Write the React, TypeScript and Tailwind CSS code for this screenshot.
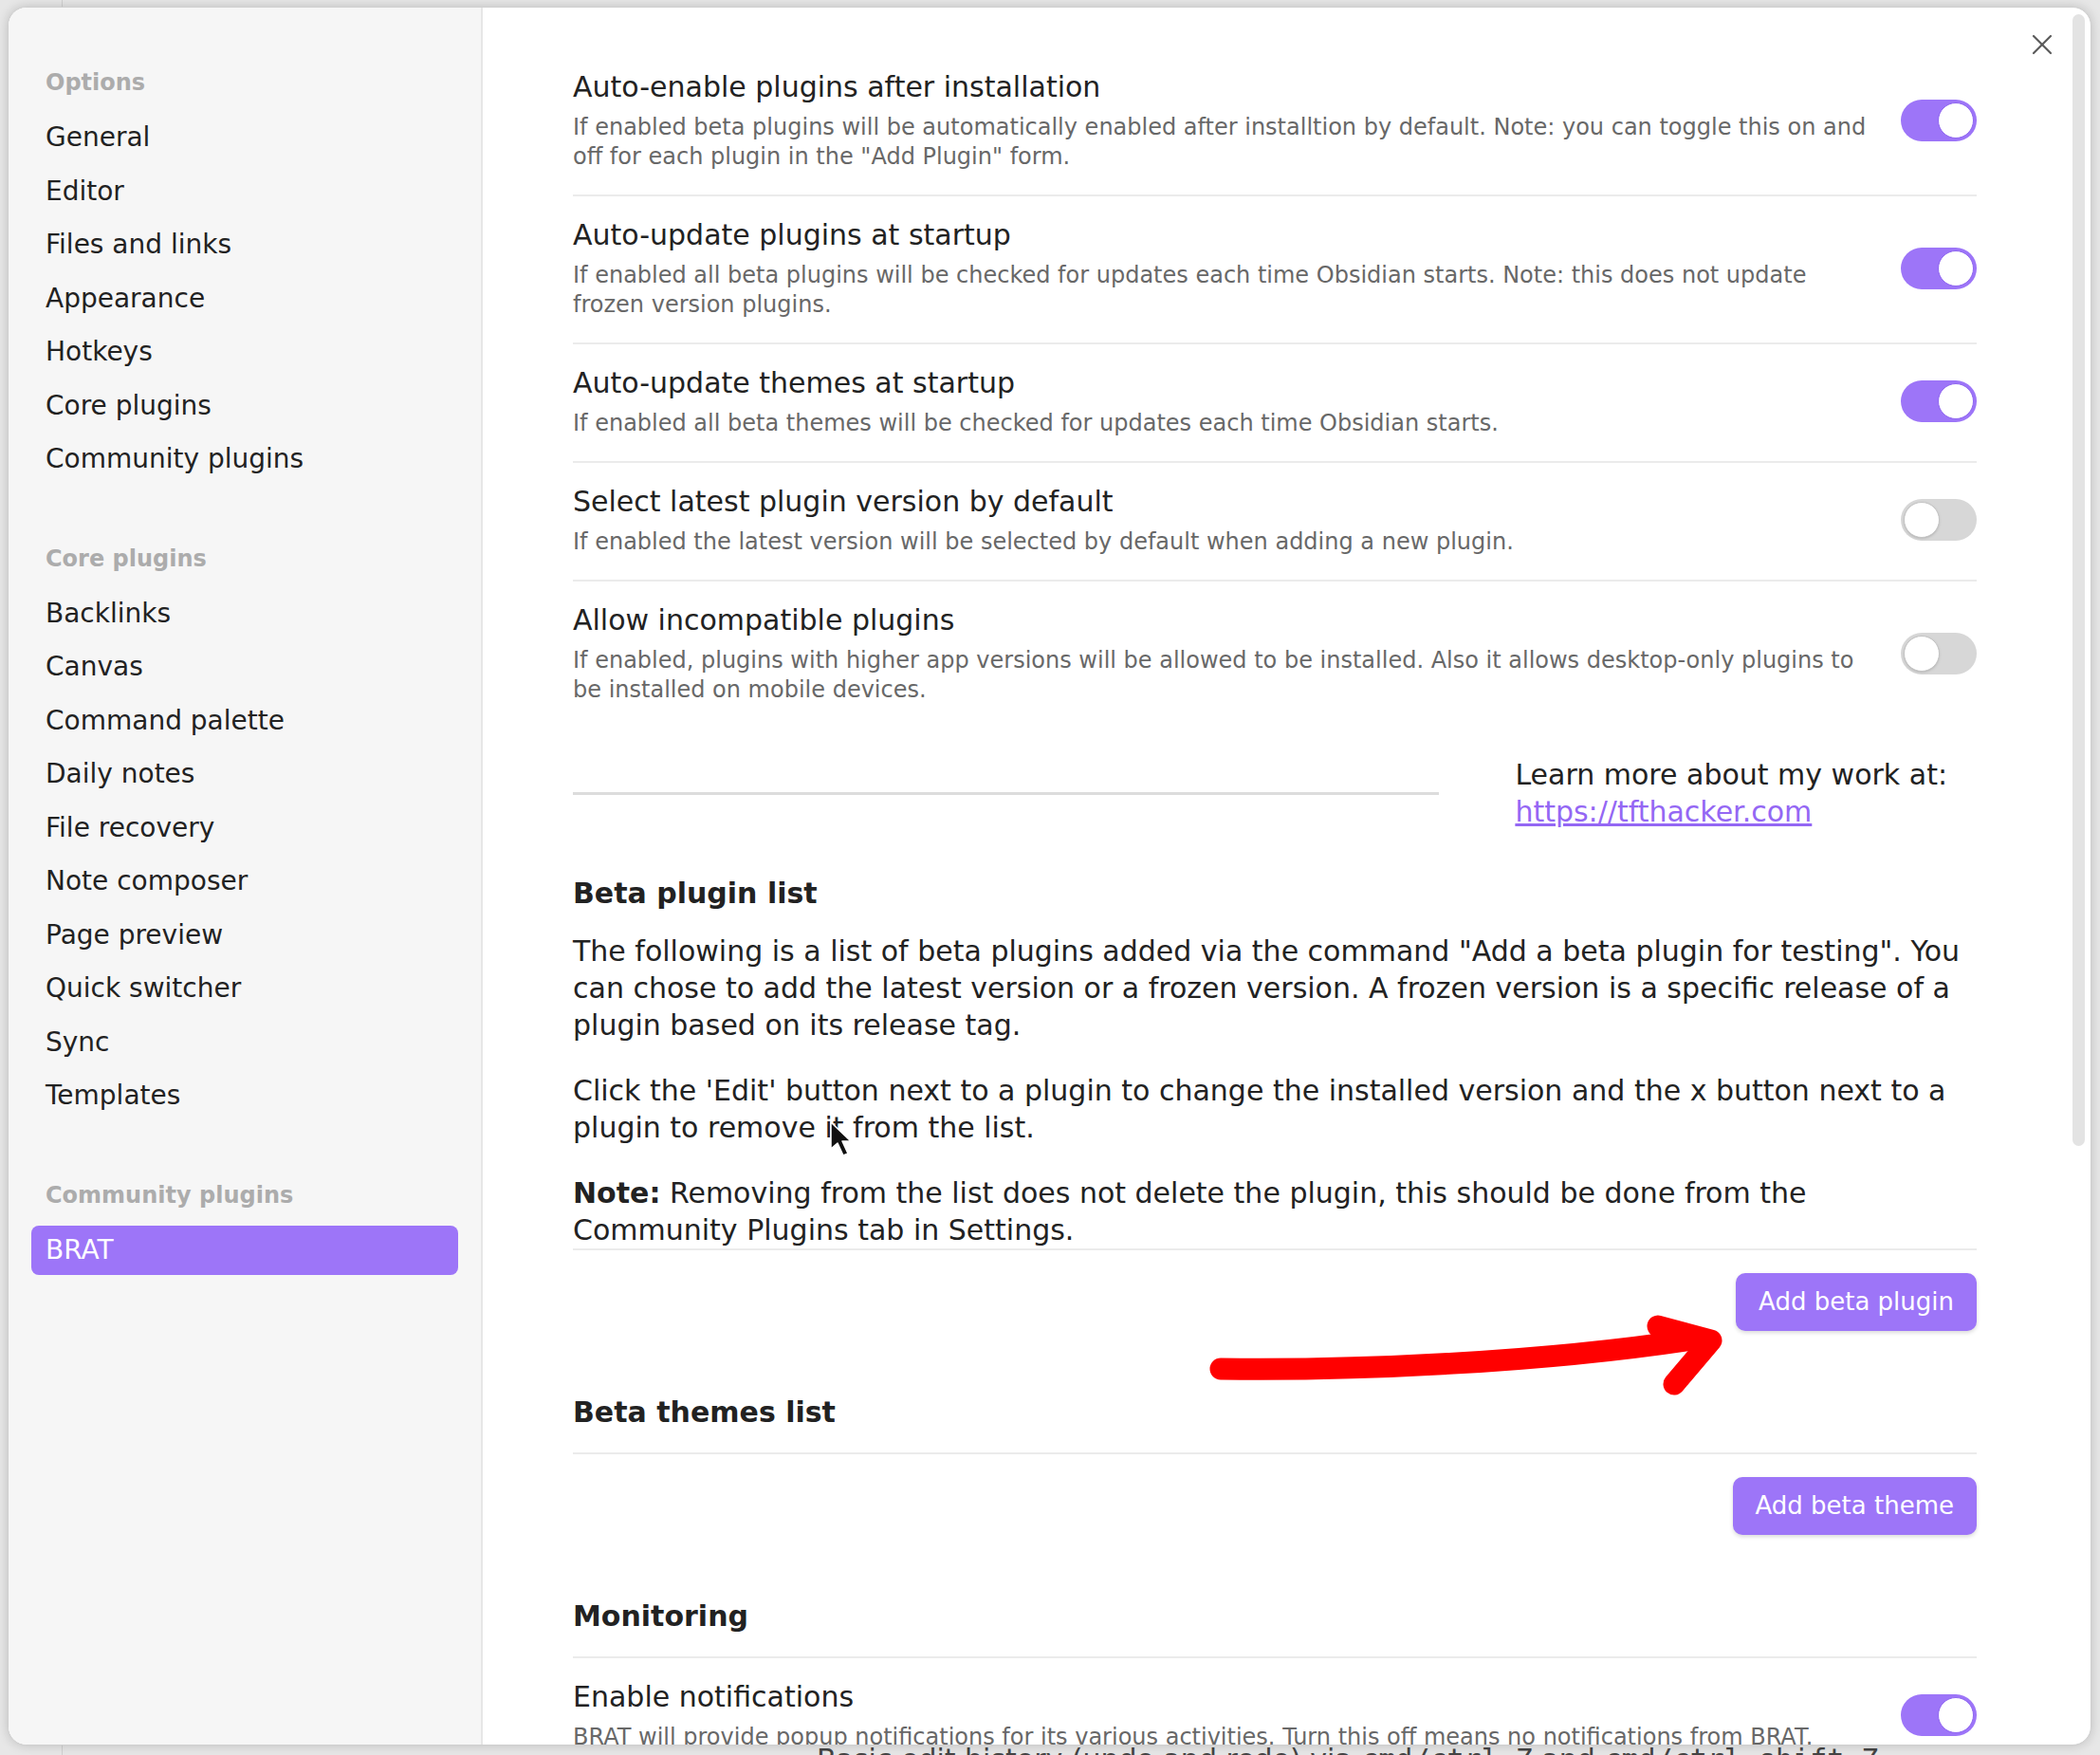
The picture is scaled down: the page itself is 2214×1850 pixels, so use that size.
import { ReactNode } from "react";

const ACCENT = "bg-[#9d75f8]";

function Toggle({ on }: { on: boolean }) {
  return (
    <div
      className={`w-[80px] h-[44px] shrink-0 rounded-full p-[3px] flex ${
        on ? `${ACCENT} justify-end` : "bg-[#d7d7d7] justify-start"
      }`}
    >
      <div
        className={`w-[38px] h-[38px] rounded-full bg-white ${
          on ? "border border-[#8f66f0]" : "border border-[#c4c4c4] shadow-sm"
        }`}
      />
    </div>
  );
}

function SettingItem({
  title,
  desc,
  on,
  first,
}: {
  title: string;
  desc: ReactNode;
  on: boolean;
  first?: boolean;
}) {
  return (
    <div
      className={`flex items-center gap-[30px] pt-[21px] pb-[24px] ${
        first ? "" : "border-t-2 border-[#ebebeb]"
      }`}
    >
      <div className="flex-1 min-w-0">
        <div className="text-[30px] leading-[39px] text-[#222222]">{title}</div>
        <div className="mt-[8px] text-[24px] leading-[31px] text-[#686868]">{desc}</div>
      </div>
      <Toggle on={on} />
    </div>
  );
}

function NavGroup({ label, items, active, first }: { label: string; items: string[]; active?: string; first?: boolean }) {
  return (
    <div className={first ? "" : "mt-[60.5px]"}>
      <div className="h-[36px] px-[15px] mb-[14px] flex items-center text-[24px] font-bold text-[#acacac]">
        {label}
      </div>
      <div className="flex flex-col gap-[4.5px]">
        {items.map((it) => (
          <div
            key={it}
            className={`h-[52px] px-[15px] flex items-center rounded-[8px] text-[28px] ${
              it === active ? `${ACCENT} text-white` : "text-[#222222]"
            }`}
          >
            {it}
          </div>
        ))}
      </div>
    </div>
  );
}

function PurpleButton({ label }: { label: string }) {
  return (
    <div className="flex justify-end pt-[24px]">
      <button
        className={`h-[61px] px-[24px] rounded-[10px] ${ACCENT} text-white text-[26px] shadow-[0_2px_4px_rgba(0,0,0,0.15)]`}
      >
        {label}
      </button>
    </div>
  );
}

export default function App() {
  return (
    <div className="relative w-[2214px] h-[1850px] overflow-hidden bg-[#e7e7e7] font-['DejaVu_Sans',sans-serif]">
      {/* page behind the modal */}
      <div className="flex h-full">
        <div className="w-[66px] border-r border-[#d0d0d0]" />
        <div className="flex-1 pl-[795px] pt-[1835px] text-[30px] leading-[39px] text-[#444444] whitespace-nowrap">
          Basic edit history (undo and redo) via <span className="font-['DejaVu_Sans_Mono',monospace]">cmd/ctrl-Z</span> and{" "}
          <span className="font-['DejaVu_Sans_Mono',monospace]">cmd/ctrl-shift-Z</span>.
        </div>
      </div>

      {/* settings modal */}
      <div className="absolute left-[8px] top-[7px] w-[2197px] h-[1833px] rounded-[20px] border border-[#cfcfcf] bg-white shadow-[0_0_12px_rgba(0,0,0,0.18)] overflow-hidden flex">
        <div className="w-[500px] shrink-0 bg-[#f6f6f6] border-r-2 border-[#e6e6e6] pt-[61px] px-[24px]">
          <NavGroup
            first
            label="Options"
            items={["General", "Editor", "Files and links", "Appearance", "Hotkeys", "Core plugins", "Community plugins"]}
          />
          <NavGroup
            label="Core plugins"
            items={[
              "Backlinks",
              "Canvas",
              "Command palette",
              "Daily notes",
              "File recovery",
              "Note composer",
              "Page preview",
              "Quick switcher",
              "Sync",
              "Templates",
            ]}
          />
          <NavGroup label="Community plugins" items={["BRAT"]} active="BRAT" />
        </div>

        <div className="relative flex-1 pt-[43px] pl-[95px] pr-[120px]">
          <SettingItem
            first
            on
            title="Auto-enable plugins after installation"
            desc={`If enabled beta plugins will be automatically enabled after installtion by default. Note: you can toggle this on and off for each plugin in the "Add Plugin" form.`}
          />
          <SettingItem
            on
            title="Auto-update plugins at startup"
            desc="If enabled all beta plugins will be checked for updates each time Obsidian starts. Note: this does not update frozen version plugins."
          />
          <SettingItem
            on
            title="Auto-update themes at startup"
            desc="If enabled all beta themes will be checked for updates each time Obsidian starts."
          />
          <SettingItem
            on={false}
            title="Select latest plugin version by default"
            desc="If enabled the latest version will be selected by default when adding a new plugin."
          />
          <SettingItem
            on={false}
            title="Allow incompatible plugins"
            desc="If enabled, plugins with higher app versions will be allowed to be installed. Also it allows desktop-only plugins to be installed on mobile devices."
          />

          <div className="mt-[30px] flex items-center">
            <div className="flex-1 h-[3px] bg-[#dcdcdc]" />
            <div className="ml-[80px] mr-[31px] whitespace-nowrap text-[30px] leading-[39px] text-[#222222]">
              <div>Learn more about my work at:</div>
              <a className="text-[#9467f4] underline">https://tfthacker.com</a>
            </div>
          </div>

          <div className="mt-[47px] border-b-2 border-[#ebebeb] text-[30px] leading-[39px] text-[#222222]">
            <div className="font-bold">Beta plugin list</div>
            <p className="mt-[22px]">
              The following is a list of beta plugins added via the command "Add a beta plugin for testing". You can chose to
              add the latest version or a frozen version. A frozen version is a specific release of a plugin based on its
              release tag.
            </p>
            <p className="mt-[30px]">
              Click the 'Edit' button next to a plugin to change the installed version and the x button next to a plugin to
              remove it from the list.
            </p>
            <p className="mt-[30px]">
              <b>Note:</b> Removing from the list does not delete the plugin, this should be done from the
              <br />
              Community Plugins tab in Settings.
            </p>
          </div>

          <PurpleButton label="Add beta plugin" />

          <div className="mt-[66px] pb-[23px] border-b-2 border-[#ebebeb] text-[30px] leading-[39px] font-bold text-[#222222]">
            Beta themes list
          </div>
          <PurpleButton label="Add beta theme" />

          <div className="mt-[66px] pb-[23px] border-b-2 border-[#ebebeb] text-[30px] leading-[39px] font-bold text-[#222222]">
            Monitoring
          </div>
          <SettingItem
            first
            on
            title="Enable notifications"
            desc="BRAT will provide popup notifications for its various activities. Turn this off means no notifications from BRAT."
          />

          {/* close button */}
          <button className="absolute right-[40px] top-[28px] w-[22px] h-[22px] text-[#5a5a5a]">
            <svg viewBox="0 0 22 22" width="22" height="22" fill="none" stroke="currentColor" strokeWidth="2.2" strokeLinecap="round">
              <path d="M2 2 20 20" />
              <path d="M20 2 2 20" />
            </svg>
          </button>

          {/* scrollbar thumb */}
          <div className="absolute right-[6px] top-[7px] w-[13px] h-[1193px] rounded-full bg-[#e3e3e3]" />
        </div>
      </div>

      {/* annotation: red arrow + mouse cursor */}
      <svg className="absolute inset-0 pointer-events-none" width="2214" height="1850" viewBox="0 0 2214 1850">
        <g fill="none" stroke="#ff0000" strokeWidth="23" strokeLinecap="round" strokeLinejoin="round">
          <path d="M1287 1443 C1430 1445 1630 1436 1790 1411" />
          <path d="M1748 1398 L1804 1413 L1765 1459" />
        </g>
        <path
          d="M876 1183 L876 1211 L883 1205 L889 1218 L894 1216 L888 1203 L897 1203 Z"
          fill="#111111"
          stroke="#ffffff"
          strokeWidth="1.5"
          strokeLinejoin="round"
        />
      </svg>
    </div>
  );
}
